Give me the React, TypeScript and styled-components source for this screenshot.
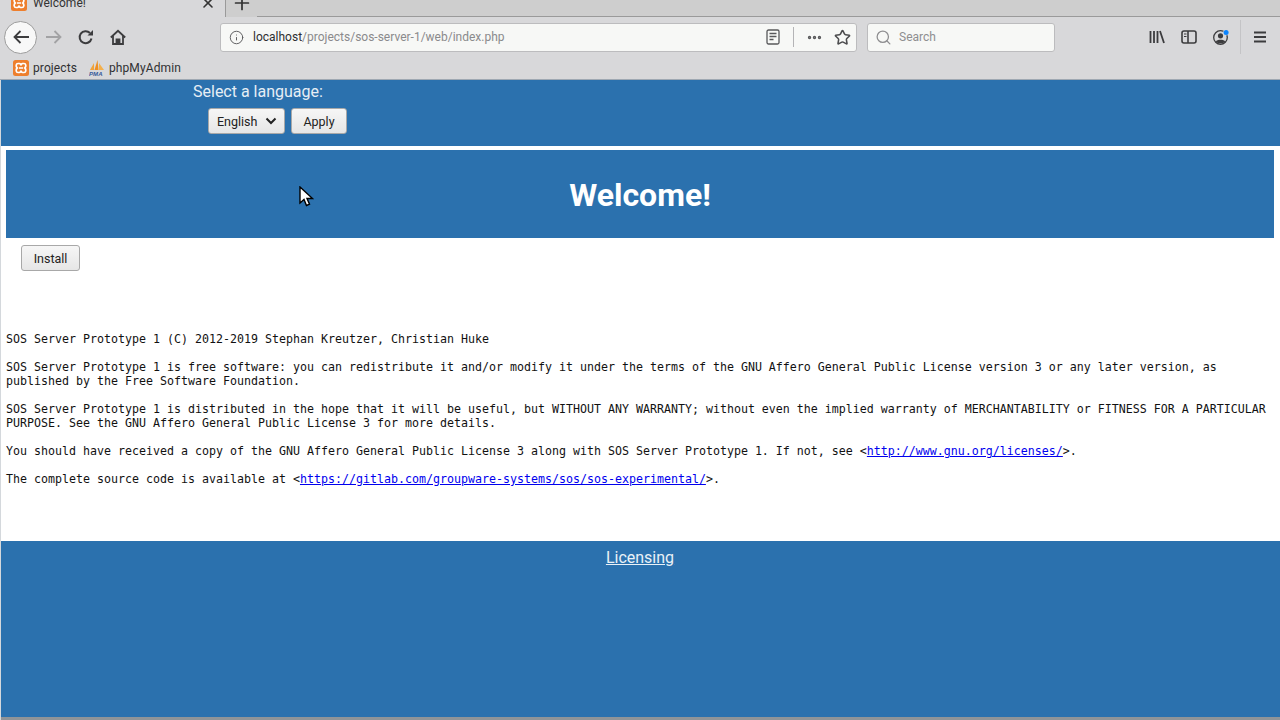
import React from 'react'
import styled, { createGlobalStyle } from 'styled-components'
import { X, Plus, Info, Ellipsis, Star, Search } from 'lucide-react'

const GlobalStyle = createGlobalStyle`
  html, body {
    margin: 0;
    padding: 0;
    height: 720px;
    overflow: hidden;
    background: #fff;
    font-family: Roboto, "Liberation Sans", sans-serif;
  }
`

const Frame = styled.div`
  position: relative;
  width: 1280px;
  height: 720px;
  display: flex;
  flex-direction: column;
  overflow: hidden;
`

const TabStrip = styled.div`
  height: 17px;
  display: flex;
  align-items: flex-end;
  background: #cecece;
  overflow: hidden;
  flex: none;
`

const Tab = styled.div`
  width: 226px;
  height: 28px;
  flex: none;
  box-sizing: border-box;
  display: flex;
  align-items: center;
  padding: 0 9px 0 11px;
  background: #d8d8da;
  border-right: 1px solid #9a9a9a;
  color: #333;
  font-size: 12px;
`

const TabTitle = styled.span`
  flex: 1;
  margin-left: 6px;
`

const NewTab = styled.div`
  width: 31px;
  height: 28px;
  flex: none;
  display: flex;
  align-items: center;
  justify-content: center;
  color: #333;
`

const StripRest = styled.div`
  flex: 1;
  height: 1px;
  background: #9a9a9a;
  align-self: flex-end;
`

const NavBar = styled.div`
  height: 40px;
  flex: none;
  display: flex;
  align-items: center;
  padding: 0 4px;
  background: #d8d8da;
`

const BackButton = styled.div`
  width: 33px;
  height: 33px;
  box-sizing: border-box;
  border-radius: 50%;
  border: 1px solid #9c9c9c;
  background: #f8f8f8;
  display: flex;
  align-items: center;
  justify-content: center;
  color: #3c3c3e;
  margin-right: 1px;
  flex: none;
`

const NavIcon = styled.div<{ $width?: number; $faded?: boolean }>`
  width: ${({ $width }) => $width ?? 32}px;
  height: 32px;
  flex: none;
  display: flex;
  align-items: center;
  justify-content: center;
  color: ${({ $faded }) => ($faded ? '#a2a2a4' : '#3c3c3e')};
`

const Field = styled.div`
  height: 29px;
  box-sizing: border-box;
  display: flex;
  align-items: center;
  border: 1px solid #bcbcbe;
  border-radius: 3px;
  background: #f7f8f6;
  flex: none;
  font-size: 12px;
`

const UrlField = styled(Field)`
  width: 637px;
  margin-left: 86px;
  padding: 0 0 0 8px;
`

const UrlText = styled.div`
  flex: 1;
  margin-left: 9px;
  color: #8a8a8c;
  b {
    font-weight: 400;
    color: #2e2e30;
  }
`

const UrlDivider = styled.div`
  width: 1px;
  height: 20px;
  background: #b4b4b6;
  margin: 0 12px 0 13px;
`

const MoreIcon = styled(Ellipsis)`
  margin-right: 5px;
  flex: none;
`

const SearchField = styled(Field)`
  width: 188px;
  margin-left: 10px;
  padding: 0 7px;
  color: #8e8e90;
`

const SearchLabel = styled.span`
  margin-left: 7px;
`

const RightTools = styled.div`
  margin-left: auto;
  margin-right: 3px;
  display: flex;
  align-items: center;
  color: #3c3c3e;
`

const ToolDivider = styled.div`
  width: 1px;
  height: 34px;
  background: #c4c4c6;
  margin: 0 6px 0 3px;
`

const BookmarkBar = styled.div`
  height: 23px;
  flex: none;
  box-sizing: border-box;
  display: flex;
  align-items: center;
  gap: 12px;
  padding: 0 13px 1px;
  background: #d8d8da;
  color: #303032;
  font-size: 12px;
  letter-spacing: 0.1px;
  border-bottom: 1px solid #9fa8b2;
`

const Bookmark = styled.div`
  display: flex;
  align-items: center;
  gap: 4px;
`

const Page = styled.div`
  flex: 1;
  min-height: 0;
  display: flex;
  flex-direction: column;
  background: #fff;
  border-left: 1px solid #d4d8dc;
`

const LanguageBar = styled.form`
  height: 66px;
  flex: none;
  margin: 0;
  box-sizing: border-box;
  background: #2b71ae;
  display: flex;
  flex-direction: column;
  align-items: flex-start;
  padding: 2px 0 0 192px;
`

const LanguageLabel = styled.div`
  color: #e6eef5;
  font-size: 16px;
  line-height: 19px;
`

const LanguageControls = styled.div`
  display: flex;
  gap: 6px;
  margin: 7px 0 0 15px;
`

const PageButton = styled.div`
  height: 26px;
  box-sizing: border-box;
  display: flex;
  align-items: center;
  justify-content: center;
  border: 1px solid #a8a8a8;
  border-radius: 3px;
  background: linear-gradient(#f6f6f6, #e6e6e6);
  color: #222;
  font-size: 12.5px;
`

const SelectButton = styled(PageButton)`
  width: 77px;
  justify-content: space-between;
  padding: 0 7px 0 8px;
`

const ApplyButton = styled(PageButton)`
  width: 56px;
`

const WelcomeBanner = styled.h1`
  height: 88px;
  flex: none;
  box-sizing: border-box;
  margin: 4px 6px 0 5px;
  padding-top: 2px;
  background: #2b71ae;
  color: #fff;
  font-size: 32px;
  font-weight: 700;
  display: flex;
  align-items: center;
  justify-content: center;
`

const InstallButton = styled(PageButton)`
  width: 59px;
  margin: 7px 0 0 20px;
  flex: none;
`

const Legal = styled.div`
  margin: 61px 5px 0;
  flex: none;
  height: 209px;
  font-family: "DejaVu Sans Mono", "Liberation Mono", monospace;
  font-size: 11.63px;
  line-height: 14px;
  color: #111;
  a {
    color: #0000ee;
    text-decoration: underline;
  }
  p {
    margin: 0 0 14px;
  }
`

const Footer = styled.div`
  flex: 1;
  background: #2b71ae;
  display: flex;
  justify-content: center;
  padding: 7px 1px 0 0;
  border-bottom: 3px solid #8f9498;
`

const FooterLink = styled.a`
  color: #eaf1f7;
  font-size: 16px;
  line-height: 19px;
  text-decoration: underline;
`

const CursorWrap = styled.div`
  position: absolute;
  left: 299px;
  top: 186px;
  width: 15px;
  height: 21px;
`

const XamppIcon = () => (
  <svg width="16" height="16" viewBox="0 0 16 16">
    <rect width="16" height="16" rx="2.500" fill="#ee7f2d" />
    <path
      d="M5 3.500h1.500c1 0 1 1.500 1.500 1.500s.5-1.500 1.500-1.500H11c2 0 2.500 3 .8 4.500 1.700 1.500 1.200 4.500-.8 4.500H9.500c-1 0-1-1.500-1.500-1.500s-.5 1.500-1.500 1.500H5C3 12.500 2.500 9.500 4.200 8 2.500 6.500 3 3.500 5 3.500zM6 8h4"
      fill="none"
      stroke="#fff"
      strokeWidth="1.700"
    />
  </svg>
)

const PmaIcon = () => (
  <svg width="16" height="16" viewBox="0 0 16 16">
    <path d="M1 10 5 3v7z" fill="#f0a33a" />
    <path d="M5.500 10 8.500 0l1 10z" fill="#ee8f22" />
    <path d="M10 10V3l5 7z" fill="#f4b04c" />
    <text x="0" y="15.500" fontSize="6" fontWeight="700" fontStyle="italic" fill="#35589a" fontFamily="Liberation Sans">PMA</text>
  </svg>
)

const BackArrow = () => (
  <svg width="16" height="14" viewBox="0 0 16 14" fill="none" stroke="currentColor" strokeWidth="1.800">
    <path d="M16 7H1.500M7.500 1l-6 6 6 6" />
  </svg>
)

const ForwardArrow = () => (
  <svg width="16" height="14" viewBox="0 0 16 14" fill="none" stroke="currentColor" strokeWidth="1.800">
    <path d="M0 7h14.500M8.500 1l6 6-6 6" />
  </svg>
)

const ReloadIcon = () => (
  <svg width="16" height="16" viewBox="0 0 16 16" fill="none" stroke="currentColor" strokeWidth="2">
    <path d="M13.500 9.500A6 6 0 1 1 12 4" />
    <path d="M15 1v5.500H9.500z" fill="currentColor" stroke="none" />
  </svg>
)

const HomeIcon = () => (
  <svg width="16" height="16" viewBox="0 0 16 16" fill="none" stroke="currentColor" strokeWidth="1.800">
    <path d="M.8 8.500 8 1.800l7.200 6.700" />
    <path d="M3 7v8h10V7" />
    <path d="M6.500 15v-4.500h3V15" fill="currentColor" />
  </svg>
)

const ReaderIcon = () => (
  <svg width="14" height="16" viewBox="0 0 14 16" fill="none" stroke="#58585a" strokeWidth="1.300">
    <rect x="1" y="1" width="12" height="14" rx="1.500" />
    <path d="M3.500 4.500h7M3.500 7.500h7M3.500 10.500h4" />
  </svg>
)

const LibraryIcon = () => (
  <svg width="16" height="16" viewBox="0 0 16 16" fill="none" stroke="currentColor" strokeWidth="1.800">
    <path d="M1.500 2v12M5 2v12M8.500 2v12M11 2l4 12" />
  </svg>
)

const SidebarIcon = () => (
  <svg width="16" height="16" viewBox="0 0 16 16" fill="none" stroke="currentColor" strokeWidth="1.600">
    <rect x="1" y="2" width="14" height="12" rx="2" />
    <path d="M7 2v12" />
    <path d="M3 5h2.500M3 7.500h2.500" strokeWidth="1.200" />
  </svg>
)

const AccountIcon = () => (
  <svg width="18" height="18" viewBox="0 0 18 18">
    <circle cx="8.500" cy="9.500" r="6.800" fill="none" stroke="#3c3c3e" strokeWidth="1.300" />
    <circle cx="8.500" cy="7.800" r="2.600" fill="#3c3c3e" />
    <path d="M3.800 13.500c1-2.500 8.400-2.500 9.400 0-2 2.500-7.400 2.500-9.400 0z" fill="#3c3c3e" />
    <circle cx="14.100" cy="4.500" r="3" fill="#d8d8da" />
    <circle cx="14.100" cy="4.500" r="2.500" fill="#0a84ff" />
  </svg>
)

const MenuIcon = () => (
  <svg width="14" height="14" viewBox="0 0 14 14" stroke="currentColor" strokeWidth="2">
    <path d="M1 2.500h12M1 7h12M1 11.500h12" />
  </svg>
)

const Cursor = () => (
  <svg width="15" height="21" viewBox="0 0 15 21">
    <path d="M1 1v16l4-3.500 2.500 6 3-1.300-2.500-5.700h5.500z" fill="#fff" stroke="#000" strokeWidth="1.400" />
  </svg>
)

const App = () => (
  <Frame>
    <GlobalStyle />
    <TabStrip>
      <Tab>
        <XamppIcon />
        <TabTitle>Welcome!</TabTitle>
        <X size={16} strokeWidth={2.4} />
      </Tab>
      <NewTab>
        <Plus size={22} strokeWidth={1.9} />
      </NewTab>
      <StripRest />
    </TabStrip>
    <NavBar>
      <BackButton>
        <BackArrow />
      </BackButton>
      <NavIcon $faded>
        <ForwardArrow />
      </NavIcon>
      <NavIcon>
        <ReloadIcon />
      </NavIcon>
      <NavIcon>
        <HomeIcon />
      </NavIcon>
      <UrlField>
        <Info size={15} color="#58585a" strokeWidth={1.5} />
        <UrlText>
          <b>localhost</b>/projects/sos-server-1/web/index.php
        </UrlText>
        <ReaderIcon />
        <UrlDivider />
        <MoreIcon size={17} color="#58585a" strokeWidth={2.8} />
        <NavIcon $width={28}>
          <Star size={17} color="#4c4c4e" strokeWidth={2.2} />
        </NavIcon>
      </UrlField>
      <SearchField>
        <Search size={17} strokeWidth={1.8} />
        <SearchLabel>Search</SearchLabel>
      </SearchField>
      <RightTools>
        <NavIcon>
          <LibraryIcon />
        </NavIcon>
        <NavIcon>
          <SidebarIcon />
        </NavIcon>
        <NavIcon>
          <AccountIcon />
        </NavIcon>
        <ToolDivider />
        <NavIcon $width={26}>
          <MenuIcon />
        </NavIcon>
      </RightTools>
    </NavBar>
    <BookmarkBar>
      <Bookmark>
        <XamppIcon />
        projects
      </Bookmark>
      <Bookmark>
        <PmaIcon />
        phpMyAdmin
      </Bookmark>
    </BookmarkBar>
    <Page>
      <LanguageBar>
        <LanguageLabel>Select a language:</LanguageLabel>
        <LanguageControls>
          <SelectButton>
            English
            <svg width="12" height="8" viewBox="0 0 12 8" fill="none" stroke="#222" strokeWidth="2">
              <path d="M1.500 1.500 6 6l4.500-4.500" />
            </svg>
          </SelectButton>
          <ApplyButton>Apply</ApplyButton>
        </LanguageControls>
      </LanguageBar>
      <WelcomeBanner>Welcome!</WelcomeBanner>
      <InstallButton>Install</InstallButton>
      <Legal>
        <p>SOS Server Prototype 1 (C) 2012-2019 Stephan Kreutzer, Christian Huke</p>
        <p>
          SOS Server Prototype 1 is free software: you can redistribute it and/or modify it under the terms of the GNU Affero General Public License version 3 or any later version, as published by the Free Software Foundation.
        </p>
        <p>
          SOS Server Prototype 1 is distributed in the hope that it will be useful, but WITHOUT ANY WARRANTY; without even the implied warranty of MERCHANTABILITY or FITNESS FOR A PARTICULAR PURPOSE. See the GNU Affero General Public License 3 for more details.
        </p>
        <p>
          You should have received a copy of the GNU Affero General Public License 3 along with SOS Server Prototype 1. If not, see &lt;<a href="#">http://www.gnu.org/licenses/</a>&gt;.
        </p>
        <p>
          The complete source code is available at &lt;<a href="#">https://gitlab.com/groupware-systems/sos/sos-experimental/</a>&gt;.
        </p>
      </Legal>
      <Footer>
        <FooterLink href="#">Licensing</FooterLink>
      </Footer>
    </Page>
    <CursorWrap>
      <Cursor />
    </CursorWrap>
  </Frame>
)

export default App
